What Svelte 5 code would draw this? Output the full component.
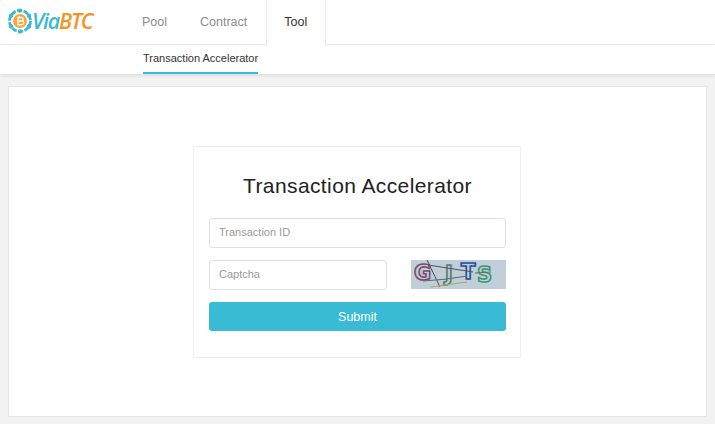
<script>
	const tabs = [
		{ label: 'Pool', active: false },
		{ label: 'Contract', active: false },
		{ label: 'Tool', active: true }
	];
</script>

<div class="page">
	<header class="topbar">
		<a class="logo" href="#top">
			<svg width="26" height="26" viewBox="0 0 26 26">
				<circle cx="13" cy="13" r="10.5" fill="none" stroke="#3bb9d6" stroke-width="2.8" stroke-dasharray="5.2 1.4" />
				<circle cx="13" cy="2.6" r="2.2" fill="#3bb9d6" />
				<circle cx="4" cy="7.8" r="2.2" fill="#3bb9d6" />
				<circle cx="22" cy="7.8" r="2.2" fill="#3bb9d6" />
				<circle cx="4" cy="18.2" r="2.2" fill="#3bb9d6" />
				<circle cx="22" cy="18.2" r="2.2" fill="#3bb9d6" />
				<circle cx="13" cy="23.4" r="2.2" fill="#3bb9d6" />
				<circle cx="13" cy="13" r="7" fill="#f7a63c" />
				<path d="M11 9.2v7.6M10.2 9.5h4.2a1.7 1.7 0 0 1 0 3.5h-3.4M11 13h3.9a1.8 1.8 0 0 1 0 3.6h-4.7M12.4 8v1.4M12.4 16.6V18" fill="none" stroke="#fff" stroke-width="1.3" />
			</svg>
			<span class="word"><span class="via">Via</span><span class="btc">BTC</span></span>
		</a>
		<nav class="tabs">
			{#each tabs as tab}
				<a class="tab" class:active={tab.active} href="#top">{tab.label}</a>
			{/each}
		</nav>
	</header>

	<div class="subnav">
		<a class="sublink" href="#top">Transaction Accelerator</a>
	</div>

	<main class="panel">
		<form class="card" on:submit|preventDefault>
			<h1>Transaction Accelerator</h1>
			<input class="field" type="text" placeholder="Transaction ID" />
			<div class="captcha-row">
				<input class="field captcha-input" type="text" placeholder="Captcha" />
				<svg class="captcha" width="95" height="29" viewBox="0 0 95 29">
					<rect width="95" height="29" fill="#bfced8" />
					<text x="3" y="20" class="ch" stroke="#7d4d6c">G</text>
					<text x="34" y="21" class="ch" stroke="#5d7a70">J</text>
					<text x="50" y="19" class="ch" stroke="#1f4f9c">T</text>
					<text x="66" y="22" class="ch" stroke="#3a9a70">S</text>
					<path d="M16 0 L29 27" stroke="#4b4f52" stroke-width="1" fill="none" />
					<path d="M17 5 L62 12" stroke="#50555c" stroke-width="1" fill="none" />
					<path d="M12 21 Q34 20 56 16" stroke="#5f6a70" stroke-width="1" fill="none" />
					<path d="M64 13 L80 12" stroke="#5f6a70" stroke-width="1" fill="none" />
					<path d="M19 27 L56 22" stroke="#a8ac5e" stroke-width="1" fill="none" />
				</svg>
			</div>
			<button class="submit" type="submit">Submit</button>
		</form>
	</main>
</div>

<style>
	:global(body) {
		margin: 0;
		background: #f2f2f2;
		font-family: 'Liberation Sans', Arial, sans-serif;
	}

	.page {
		height: 424px;
		overflow: hidden;
		background: #f2f2f2;
	}

	a {
		text-decoration: none;
	}

	.topbar {
		display: flex;
		height: 44px;
		background: #fff;
		border-bottom: 1px solid #ececec;
	}

	.logo {
		display: flex;
		align-items: center;
		width: 125px;
		padding-left: 7px;
		box-sizing: border-box;
		margin-bottom: 2px;
	}

	.word {
		font-family: 'Open Sans', sans-serif;
		font-style: italic;
		font-weight: 600;
		font-size: 21.5px;
		letter-spacing: -1.2px;
		line-height: 1;
		margin-left: -1px;
	}

	.via {
		color: #3bb9d6;
	}

	.btc {
		color: #f7931e;
	}

	.tabs {
		display: flex;
		height: 45px;
	}

	.tab {
		display: flex;
		align-items: center;
		box-sizing: border-box;
		height: 44px;
		padding: 0 16px 0 17px;
		font-size: 12.5px;
		color: #8c8c8c;
	}

	.tab.active {
		height: 45px;
		margin-left: 3px;
		padding: 0 18px 1px 17px;
		color: #333;
		background: #fff;
		border-left: 1px solid #ececec;
		border-right: 1px solid #ececec;
	}

	.subnav {
		display: flex;
		height: 29px;
		padding-left: 143px;
		background: #fff;
		border-bottom: 1px solid #e2e2e2;
		box-shadow: 0 1px 3px rgba(0, 0, 0, 0.08);
	}

	.sublink {
		height: 27px;
		line-height: 26px;
		font-size: 11px;
		color: #333;
		border-bottom: 2px solid #39bbd6;
	}

	.panel {
		display: flex;
		justify-content: center;
		box-sizing: border-box;
		width: 699px;
		height: 331px;
		margin: 11px 8px 0;
		padding: 59px 1px 0 0;
		background: #fff;
		border: 1px solid #e6e6e6;
	}

	.card {
		box-sizing: border-box;
		width: 328px;
		height: 212px;
		padding: 0 14px 0 15px;
		border: 1px solid #efefef;
	}

	h1 {
		margin: 26px 0 19px;
		font-size: 21px;
		line-height: 26px;
		font-weight: 400;
		letter-spacing: 0.4px;
		text-align: center;
		color: #222;
	}

	.field {
		display: block;
		box-sizing: border-box;
		width: 297px;
		height: 30px;
		padding: 0 9px 3px;
		font-family: inherit;
		font-size: 11px;
		background: #fff;
		border: 1px solid #e0e0e0;
		border-radius: 3px;
		outline: none;
	}

	.field::placeholder {
		color: #9a9a9a;
		opacity: 1;
	}

	.captcha-row {
		display: flex;
		justify-content: space-between;
		align-items: flex-start;
		margin-top: 12px;
	}

	.captcha-input {
		width: 178px;
	}

	.captcha {
		display: block;
	}

	.ch {
		font-family: 'DejaVu Sans', sans-serif;
		font-size: 21px;
		font-weight: 700;
		fill: none;
		stroke-width: 1.6;
	}

	.submit {
		display: block;
		width: 297px;
		height: 29px;
		margin-top: 12px;
		padding: 0;
		font-family: inherit;
		font-size: 12.5px;
		color: #fff;
		background: #39bbd6;
		border: none;
		border-radius: 3px;
	}
</style>
